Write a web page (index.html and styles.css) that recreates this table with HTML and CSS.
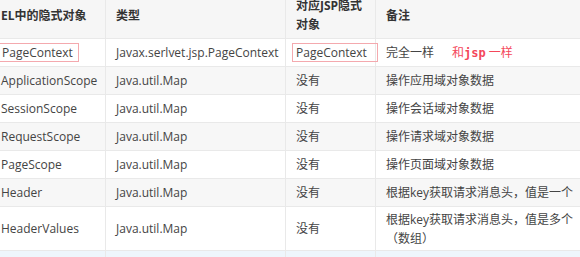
FILE: index.html
```html
<!DOCTYPE html>
<html lang="zh">
<head>
<meta charset="utf-8">
<title>EL隐式对象</title>
<link rel="stylesheet" href="styles.css">
</head>
<body>
<table class="grid">
  <colgroup>
    <col class="c1"><col class="c2"><col class="c3"><col class="c4">
  </colgroup>
  <thead>
    <tr class="head">
      <th>EL中的隐式对象</th>
      <th>类型</th>
      <th>对应JSP隐式<br>对象</th>
      <th>备注</th>
    </tr>
  </thead>
  <tbody>
    <tr class="row">
      <td><span class="mark mark-a">PageContext</span></td>
      <td>Javax.serlvet.jsp.PageContext</td>
      <td><span class="mark mark-b">PageContext</span></td>
      <td>完全一样<span class="note">和<code>jsp</code> 一样</span></td>
    </tr>
    <tr class="row alt">
      <td>ApplicationScope</td>
      <td>Java.util.Map</td>
      <td>没有</td>
      <td>操作应用域对象数据</td>
    </tr>
    <tr class="row">
      <td>SessionScope</td>
      <td>Java.util.Map</td>
      <td>没有</td>
      <td>操作会话域对象数据</td>
    </tr>
    <tr class="row alt">
      <td>RequestScope</td>
      <td>Java.util.Map</td>
      <td>没有</td>
      <td>操作请求域对象数据</td>
    </tr>
    <tr class="row">
      <td>PageScope</td>
      <td>Java.util.Map</td>
      <td>没有</td>
      <td>操作页面域对象数据</td>
    </tr>
    <tr class="row alt">
      <td>Header</td>
      <td>Java.util.Map</td>
      <td>没有</td>
      <td>根据key获取请求消息头，值是一个</td>
    </tr>
    <tr class="row tall">
      <td>HeaderValues</td>
      <td>Java.util.Map</td>
      <td>没有</td>
      <td>根据key获取请求消息头，值是多个<br>（数组）</td>
    </tr>
    <tr class="row hover">
      <td>&nbsp;</td>
      <td>&nbsp;</td>
      <td>&nbsp;</td>
      <td>&nbsp;</td>
    </tr>
  </tbody>
</table>
</body>
</html>
```
FILE: styles.css
```css
html, body {
  margin: 0;
  padding: 0;
  overflow: hidden;
  background: #ffffff;
}

body {
  font-family: "Open Sans", "Noto Sans CJK SC", sans-serif;
  font-size: 12px;
  color: #444444;
}

.grid {
  border-collapse: collapse;
  table-layout: fixed;
  width: 600px;
  margin: -9px 0 0 -10px;
}

.c1 { width: 115px; }
.c2 { width: 180px; }
.c3 { width: 90px; }
.c4 { width: 215px; }

.grid th,
.grid td {
  border: 1px solid #e9e9e9;
  padding: 0 9px 0 10px;
  line-height: 19px;
  text-align: left;
  vertical-align: middle;
  white-space: nowrap;
  overflow: visible;
}

.grid th {
  font-weight: 700;
  color: #333333;
  background: #f6f6f6;
}

.head { height: 47px; }

.row { height: 28px; }
.row.tall { height: 44px; }
.row.alt td { background: #f7f7f7; }
.row.hover td { background: #eef6fc; height: 30px; }

.mark {
  display: inline-block;
  border: 1px solid #f4a9ae;
  line-height: 17px;
}

.mark-a {
  margin-left: -4px;
  padding: 0 5px 0 4px;
}

.mark-b {
  margin-left: -4px;
  padding: 0 10px 0 3px;
}

.note {
  color: #f4475a;
  margin-left: 18px;
}

.note code {
  font-family: "DejaVu Sans Mono", "Liberation Mono", monospace;
  font-size: 12px;
  font-weight: 600;
}
```
